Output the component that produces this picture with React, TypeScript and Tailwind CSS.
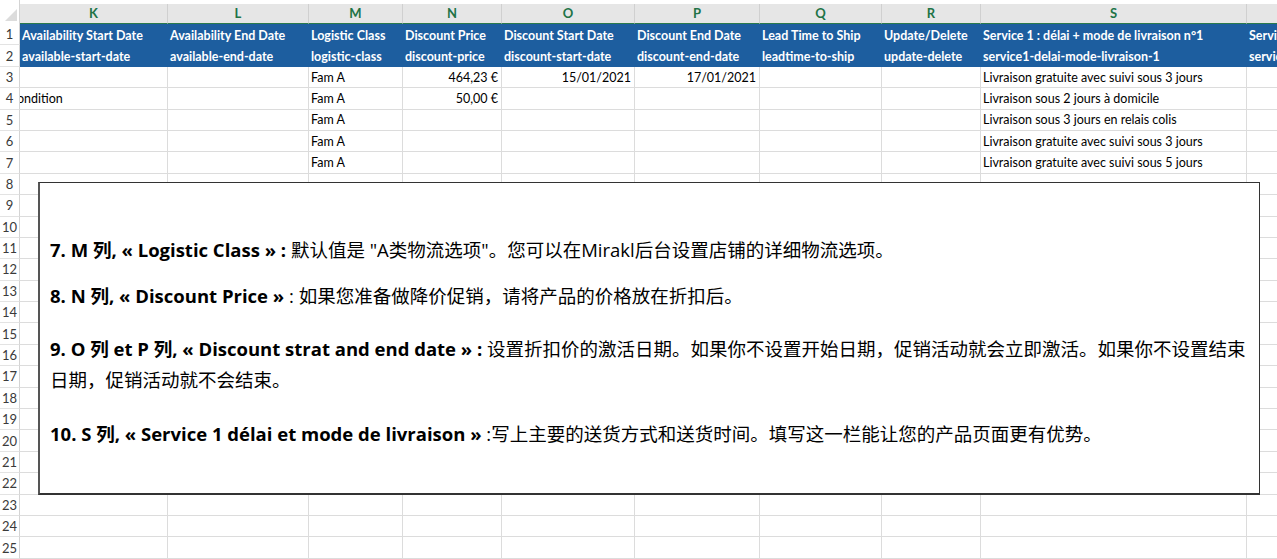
import React from "react";

const cols = [
  { k: "K", w: 148 },
  { k: "L", w: 141 },
  { k: "M", w: 94 },
  { k: "N", w: 99 },
  { k: "O", w: 133 },
  { k: "P", w: 125 },
  { k: "Q", w: 122 },
  { k: "R", w: 99 },
  { k: "S", w: 266 },
  { k: "T", w: 110 },
];

const head1 = [
  "Availability Start Date",
  "Availability End Date",
  "Logistic Class",
  "Discount Price",
  "Discount Start Date",
  "Discount End Date",
  "Lead Time to Ship",
  "Update/Delete",
  "Service 1 : délai + mode de livraison n°1",
  "Service 2 : délai + mode de livraison n°2",
];
const head2 = [
  "available-start-date",
  "available-end-date",
  "logistic-class",
  "discount-price",
  "discount-start-date",
  "discount-end-date",
  "leadtime-to-ship",
  "update-delete",
  "service1-delai-mode-livraison-1",
  "service2-delai-mode-livraison-2",
];

type Cell = { t: string; right?: boolean; clip?: boolean };
const data: Record<number, Record<number, Cell>> = {
  3: {
    2: { t: "Fam A" },
    3: { t: "464,23 €", right: true },
    4: { t: "15/01/2021", right: true },
    5: { t: "17/01/2021", right: true },
    8: { t: "Livraison gratuite avec suivi sous 3 jours" },
  },
  4: {
    0: { t: "ondition", clip: true },
    2: { t: "Fam A" },
    3: { t: "50,00 €", right: true },
    8: { t: "Livraison sous 2 jours à domicile" },
  },
  5: { 2: { t: "Fam A" }, 8: { t: "Livraison sous 3 jours en relais colis" } },
  6: { 2: { t: "Fam A" }, 8: { t: "Livraison gratuite avec suivi sous 3 jours" } },
  7: { 2: { t: "Fam A" }, 8: { t: "Livraison gratuite avec suivi sous 5 jours" } },
};

const rows = Array.from({ length: 25 }, (_, i) => i + 1);

export default function App() {
  return (
    <div
      className="relative w-[1277px] h-[559px] overflow-hidden bg-white"
      style={{ fontFamily: "Lato, 'Noto Sans CJK SC', sans-serif" }}
    >
      {/* column header */}
      <div className="flex h-[24px] w-max">
        <div className="relative w-[20px] h-[24px] bg-white border-r border-[#d4d4d4]">
          <div className="absolute right-[2px] bottom-[3px] w-0 h-0 border-l-[12px] border-l-transparent border-b-[12px] border-b-[#dcdcdc]" />
        </div>
        {cols.map((c) => (
          <div key={c.k} className="pt-[4px] h-[24px]" style={{ width: c.w }}>
            <div className="h-[20px] bg-[#e6e6e6] border-r border-[#d0d0d0] border-b border-b-[#2a7a4c] flex items-center justify-center text-[13px] font-bold text-[#217346] leading-none">
              {c.k}
            </div>
          </div>
        ))}
      </div>

      {/* rows */}
      {rows.map((r) => {
        const blue = r <= 2;
        return (
          <div key={r} className="flex h-[21.4px] w-max">
            <div className="w-[20px] shrink-0 border-r border-[#d4d4d4] border-b border-b-[#e3e3e3] flex items-center justify-center pt-[1px] text-[13px] text-[#3a3a3a] leading-none">
              {r}
            </div>
            {cols.map((c, ci) => {
              if (blue) {
                return (
                  <div
                    key={c.k}
                    className="shrink-0 bg-[#1d5e9f] text-white font-bold text-[12.5px] flex items-end pb-[3px] pl-[2px] overflow-hidden whitespace-nowrap leading-none"
                    style={{ width: c.w }}
                  >
                    {r === 1 ? head1[ci] : head2[ci]}
                  </div>
                );
              }
              const cell = data[r]?.[ci];
              return (
                <div
                  key={c.k}
                  className={
                    "shrink-0 border-r border-b border-[#dcdcdc] text-[12.5px] text-black flex items-end pb-[3px] overflow-hidden whitespace-nowrap leading-none " +
                    (cell?.right ? "justify-end pr-[3px]" : "pl-[2px]")
                  }
                  style={{ width: c.w }}
                >
                  {cell ? (
                    cell.clip ? (
                      <span className="-ml-[5px]">{cell.t}</span>
                    ) : (
                      cell.t
                    )
                  ) : null}
                </div>
              );
            })}
          </div>
        );
      })}

      {/* text box overlay */}
      <div
        className="absolute left-[38px] top-[182px] w-[1222px] h-[313px] bg-white border border-[#333] border-l-2 border-b-2 border-l-[#555] pl-[10px] pt-[51px] text-black text-[18.5px] leading-[31px] whitespace-nowrap"
        style={{ fontFamily: "'Open Sans', 'Noto Sans CJK SC', sans-serif" }}
      >
        <p>
          <b>7. M 列, « Logistic Class » :</b> 默认值是 "A类物流选项"。您可以在Mirakl后台设置店铺的详细物流选项。
        </p>
        <p className="mt-[15px]">
          <b>8. N 列, « Discount Price »</b> : 如果您准备做降价促销，请将产品的价格放在折扣后。
        </p>
        <p className="mt-[22px]">
          <b>9. O 列 et P 列, « Discount strat and end date » :</b> 设置折扣价的激活日期。如果你不设置开始日期，促销活动就会立即激活。如果你不设置结束
          <br />
          日期，促销活动就不会结束。
        </p>
        <p className="mt-[23px]">
          <b>10. S 列, « Service 1 délai et mode de livraison »</b> :写上主要的送货方式和送货时间。填写这一栏能让您的产品页面更有优势。
        </p>
      </div>
    </div>
  );
}
